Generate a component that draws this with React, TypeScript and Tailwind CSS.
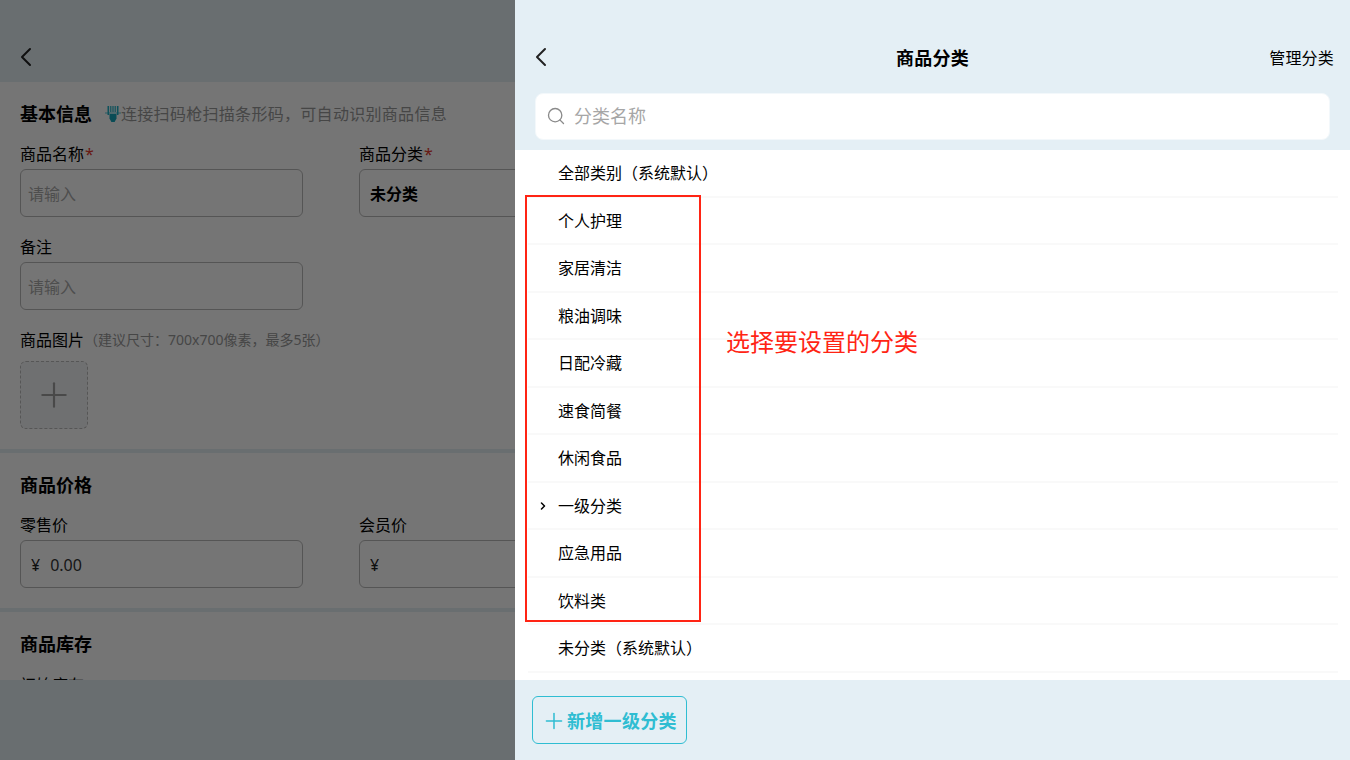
import { ChevronLeft, ChevronRight, Plus, Search } from "lucide-react";

const categories = [
  "全部类别（系统默认）",
  "个人护理",
  "家居清洁",
  "粮油调味",
  "日配冷藏",
  "速食简餐",
  "休闲食品",
  "一级分类",
  "应急用品",
  "饮料类",
  "未分类（系统默认）",
];

const font = "font-['Noto_Sans','Noto_Sans_CJK_SC',sans-serif]";

function Label({ text, required }: { text: string; required?: boolean }) {
  return (
    <div className="h-6 text-base leading-6 text-black">
      {text}
      {required && <span className="ml-px text-[#e23b2e]">*</span>}
    </div>
  );
}

function Field({ children }: { children: React.ReactNode }) {
  return (
    <div className="mt-[3px] flex h-12 items-center rounded-md border border-[#b9b9b9] pt-[2px] text-base">
      {children}
    </div>
  );
}

function ScanIcon() {
  return (
    <svg width="16" height="17" viewBox="0 0 16 17" className="shrink-0">
      <path d="M0 7h16" stroke="#2fbdd2" strokeWidth="0.8" />
      <path d="M2.5 0h1.6v9H2.5zM5.2 0h1.2v6H5.2zM7.4 0h1.2v6H7.4zM9.6 0h1.2v6H9.6zM11.9 0h1.6v9h-1.6z" fill="#1fb0c6" />
      <path d="M4.5 8h7v4.5L9.6 16H6.4l-1.9-3.5z" fill="#14a5bb" />
    </svg>
  );
}

function FormPanel() {
  return (
    <div className="relative flex h-full w-[515px] shrink-0 flex-col overflow-hidden bg-[#e4eff5]">
      <div className="flex h-[82px] items-center px-[10px] pt-[32px]">
        <ChevronLeft size={32} strokeWidth={1.5} className="text-[#222]" />
      </div>
      <div className="h-[598px] overflow-hidden bg-white">
        <section className="px-5 pt-[17px] pb-5">
          <div className="flex h-[30px] items-center">
            <h2 className="text-lg font-bold text-black">基本信息</h2>
            <span className="ml-[13px]"><ScanIcon /></span>
            <span className="text-base tracking-[0.3px] text-[#999]">连接扫码枪扫描条形码，可自动识别商品信息</span>
          </div>
          <div className="mt-[13px] grid w-[622px] grid-cols-[283px_283px] gap-x-14">
            <div>
              <Label text="商品名称" required />
              <Field>
                <span className="pl-[7px] text-[#aaa]">请输入</span>
              </Field>
            </div>
            <div>
              <Label text="商品分类" required />
              <Field>
                <span className="pl-2.5 font-bold text-black">未分类</span>
              </Field>
            </div>
          </div>
          <div className="mt-[18px] w-[283px]">
            <Label text="备注" />
            <Field>
              <span className="pl-[7px] text-[#aaa]">请输入</span>
            </Field>
          </div>
          <div className="mt-[18px] flex h-6 items-center">
            <span className="text-base text-black">商品图片</span>
            <span className="text-sm text-[#999]">（建议尺寸：700x700像素，最多5张）</span>
          </div>
          <div className="mt-[9px] flex size-[68px] items-center justify-center rounded-md border border-dashed border-[#bbb] bg-[#f2f4f7]">
            <Plus size={40} strokeWidth={1.3} className="text-[#a0a0a0]" />
          </div>
        </section>
        <div className="h-1 bg-[#e4eff5]" />
        <section className="px-5 pt-[17px] pb-5">
          <h2 className="h-[30px] text-lg leading-[30px] font-bold text-black">商品价格</h2>
          <div className="mt-[13px] grid w-[622px] grid-cols-[283px_283px] gap-x-14">
            <div>
              <Label text="零售价" />
              <Field>
                <span className="pl-2.5 text-[#222]">¥</span>
                <span className="pl-2.5 text-[#333]">0.00</span>
              </Field>
            </div>
            <div>
              <Label text="会员价" />
              <Field>
                <span className="pl-2.5 text-[#222]">¥</span>
              </Field>
            </div>
          </div>
        </section>
        <div className="h-1 bg-[#e4eff5]" />
        <section className="px-5 pt-[17px]">
          <h2 className="h-[30px] text-lg leading-[30px] font-bold text-black">商品库存</h2>
          <div className="mt-[14px]">
            <Label text="初始库存" />
          </div>
        </section>
      </div>
      <div className="flex-1" />
      <div className="absolute inset-0 bg-black/[0.54]" />
    </div>
  );
}

function CategoryPanel() {
  return (
    <div className="relative flex h-full flex-1 flex-col bg-[#e4eff5]">
      <div className="relative flex h-[93px] items-center justify-center pt-[23px]">
        <ChevronLeft size={32} strokeWidth={1.5} className="absolute top-[41px] left-[10px] text-[#222]" />
        <h1 className="text-lg font-bold tracking-[0.2px] text-black">商品分类</h1>
        <button className="absolute top-[46px] right-4 text-base leading-6 tracking-[0.2px] text-black">管理分类</button>
      </div>
      <div className="px-5">
        <div className="flex h-[47px] items-center rounded-lg border border-[#f3f8fb] bg-white pb-[2px] pl-2.5">
          <Search size={20} strokeWidth={1.6} className="text-[#8a8a8a]" />
          <span className="ml-2 text-lg text-[#a6a6a6]">分类名称</span>
        </div>
      </div>
      <div className="mt-[10px] h-[530px] overflow-hidden bg-white pl-[13px] pr-3">
        {categories.map((name) => (
          <div
            key={name}
            className="relative flex h-[47.5px] items-center border-b-2 border-[#f9f9f9] pt-px pl-[30px] text-base text-black"
          >
            {name === "一级分类" && (
              <ChevronRight size={12} strokeWidth={3} className="absolute left-[9px] text-black" />
            )}
            {name}
          </div>
        ))}
      </div>
      <div className="flex-1 px-[17px] pt-4">
        <button className="flex h-12 w-[155px] items-center rounded-md border border-[#2fbdd2] pt-px pl-2 text-lg font-bold tracking-[0.3px] text-[#2fbdd2]">
          <Plus size={26} strokeWidth={1.4} className="shrink-0" />
          新增一级分类
        </button>
      </div>
      <div className="absolute top-[195px] left-[10px] h-[427px] w-[176px] border-2 border-[#ff2414]" />
      <div className="absolute top-[324px] left-[211px] text-2xl leading-9 text-[#ff2414]">选择要设置的分类</div>
    </div>
  );
}

export default function App() {
  return (
    <div className={`flex h-[760px] w-[1350px] overflow-hidden ${font}`}>
      <FormPanel />
      <CategoryPanel />
    </div>
  );
}
